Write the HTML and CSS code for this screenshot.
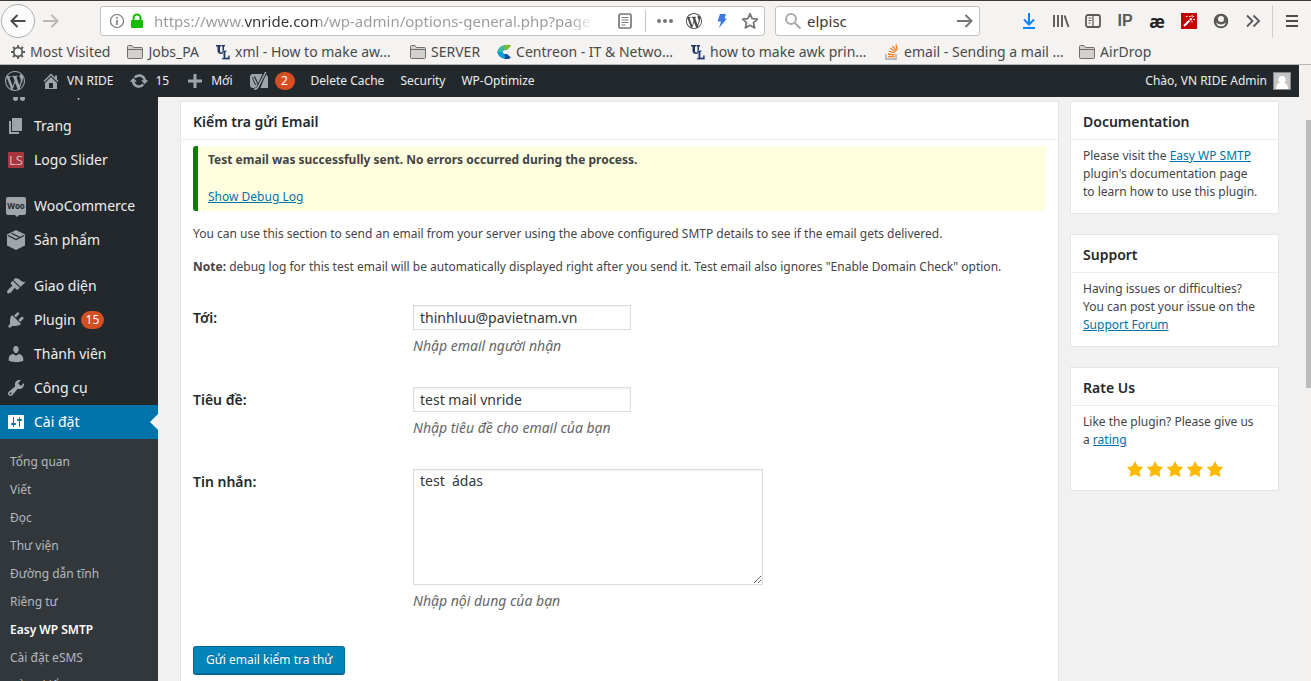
FILE: index.html
```html
<!DOCTYPE html>
<html lang="vi">
<head>
<meta charset="utf-8">
<title>Easy WP SMTP</title>
<link rel="stylesheet" href="styles.css">
</head>
<body>
<svg width="0" height="0" class="defs" aria-hidden="true">
  <symbol id="wp" viewBox="0 0 20 20"><path d="M20 10c0-5.510-4.490-10-10-10C4.480 0 0 4.490 0 10c0 5.520 4.480 10 10 10 5.510 0 10-4.480 10-10zM7.780 15.370L4.370 6.220c.550-.020 1.170-.080 1.170-.080.500-.060.440-1.130-.060-1.110 0 0-1.450.110-2.370.110-.180 0-.370 0-.580-.010C4.120 2.690 6.870 1.110 10 1.110c2.330 0 4.450.870 6.050 2.340-.680-.110-1.650.390-1.650 1.580 0 .740.450 1.360.900 2.100.350.610.550 1.360.550 2.460 0 1.490-1.400 5-1.400 5l-3.030-8.370c.540-.020.820-.170.820-.170.500-.050.440-1.250-.060-1.220 0 0-1.440.120-2.380.120-.870 0-2.330-.120-2.330-.120-.500-.030-.560 1.200-.060 1.220l.920.080 1.260 3.410zM17.410 10c.240-.640.740-1.870.430-4.250.700 1.290 1.050 2.710 1.050 4.250 0 3.290-1.730 6.240-4.400 7.780.970-2.590 1.940-5.200 2.920-7.780zM6.100 18.090C3.120 16.650 1.110 13.530 1.110 10c0-1.300.230-2.480.720-3.590C3.250 10.300 4.670 14.200 6.100 18.090zm4.030-6.630l2.580 6.980c-.860.290-1.760.450-2.710.450-.790 0-1.570-.110-2.290-.330.810-2.380 1.620-4.740 2.420-7.100z"/></symbol>
  <symbol id="folder" viewBox="0 0 18 16"><path d="M1.500 13.500v-11q0-1 1-1h3.500l1.500 2h8q1 0 1 1v9q0 1-1 1h-13q-1 0-1-1z" fill="#d3d1cf" stroke="#6f6e6d"/><path d="M2 5.500h14" stroke="#6f6e6d"/></symbol>
  <symbol id="ul" viewBox="0 0 16 16"><path d="M1 1h5v1.500H5V7q0 1.500 1.300 1.500T7.500 7V2.500h-1V1H10v1.500H9V7.500Q8.700 10 6 10T2.500 7.500v-5H1z" fill="#23365f"/><path d="M7 6.500h4.500V8h-1v5.500H13v-2h1.800V15.500H7V14h1.300V8H7z" fill="#23365f" stroke="#b6c8e6" stroke-width=".5"/></symbol>
  <symbol id="star" viewBox="0 0 20 20"><path d="M10 1l3 6 6 .75-4.120 4.620L16 19l-6-3-6 3 1.130-6.630L1 7.750 7 7z"/></symbol>
</svg>

<header class="browser">
  <div class="toolbar">
    <button class="back" aria-label="Back"><svg width="18" height="16" viewBox="0 0 18 16"><path d="M16.500 8H2.500M8.500 2l-6 6 6 6" fill="none" stroke="#4b4a49" stroke-width="2"/></svg></button>
    <button class="forward" aria-label="Forward"><svg width="18" height="16" viewBox="0 0 18 16"><path d="M1 8h14M9.500 2l6 6-6 6" fill="none" stroke="#bab9b7" stroke-width="2"/></svg></button>
    <div class="urlbar">
      <svg width="16" height="16" viewBox="0 0 16 16"><circle cx="8" cy="8" r="6.500" fill="none" stroke="#777" stroke-width="1.200"/><path d="M8 7v5M8 4v1.800" stroke="#777" stroke-width="1.600"/></svg>
      <svg width="14" height="16" viewBox="0 0 14 16"><path d="M3.500 8V5a3.500 3.500 0 0 1 7 0v3" fill="none" stroke="#12bc00" stroke-width="2"/><rect x="1" y="7" width="12" height="8" rx="1" fill="#12bc00"/></svg>
      <input class="url" aria-label="Address" value="https://www.vnride.com/wp-admin/options-general.php?page=swpsmtp_settings">
      <svg width="16" height="16" viewBox="0 0 16 16"><rect x="2" y="1" width="12" height="14" rx="1.500" fill="none" stroke="#777" stroke-width="1.700"/><path d="M4.500 4.500h7M4.500 7h7M4.500 9.500h7M4.500 12h4" stroke="#777" stroke-width="1.100"/></svg>
      <span class="split"></span>
      <svg class="dots" width="16" height="16" viewBox="0 0 16 16" fill="#777"><circle cx="2" cy="8" r="2"/><circle cx="8" cy="8" r="2"/><circle cx="14" cy="8" r="2"/></svg>
      <svg width="16" height="16" fill="#4a4a4a"><use href="#wp"/></svg>
      <svg width="14" height="16" viewBox="0 0 14 16"><path d="M5 1h6L9.500 5.500H12L4 15l2-6.500H2.500z" fill="#3b78e0"/></svg>
      <svg width="18" height="18" viewBox="0 0 18 18"><path d="M9 1.800l2.200 4.800 5.200.6-3.900 3.500 1.100 5.200L9 13.300l-4.600 2.600 1.100-5.200L1.600 7.200l5.200-.6z" fill="none" stroke="#777" stroke-width="1.800" stroke-linejoin="round"/></svg>
    </div>
    <div class="searchbar">
      <svg width="18" height="18" viewBox="0 0 18 18"><circle cx="7" cy="7" r="5" fill="none" stroke="#a9a9a9" stroke-width="2"/><path d="M11 11l5.500 5.500" stroke="#a9a9a9" stroke-width="2"/></svg>
      <input aria-label="Search" value="elpisc">
      <svg width="18" height="16" viewBox="0 0 18 16"><path d="M1 8h14M9.500 2l6 6-6 6" fill="none" stroke="#777" stroke-width="2"/></svg>
    </div>
    <div class="tools">
      <button aria-label="Downloads"><svg width="16" height="18" viewBox="0 0 16 18"><path d="M8 1v11M3 7.500l5 5 5-5M2 16h12" fill="none" stroke="#0a84ff" stroke-width="2"/></svg></button>
      <button aria-label="Library"><svg width="18" height="16" viewBox="0 0 18 16"><path d="M2 2v12M6 2v12M10 2v12M12.500 2.500l4 11.500" fill="none" stroke="#5b5a59" stroke-width="1.900"/></svg></button>
      <button aria-label="Sidebar"><svg width="16" height="16" viewBox="0 0 16 16"><rect x="1" y="2" width="14" height="12" rx="2" fill="none" stroke="#5b5a59" stroke-width="1.800"/><path d="M8 2v12M3.500 5h3M3.500 7.500h3M3.500 10h2" stroke="#5b5a59" stroke-width="1.200"/></svg></button>
      <button aria-label="IP" class="ip">IP</button>
      <button aria-label="ae" class="ae">æ</button>
      <button aria-label="Magic wand"><svg width="16" height="16" viewBox="0 0 16 16"><path d="M0 0h16v16H0z" fill="#c50000"/><path d="M3 13l5.500-5.500" stroke="#fff" stroke-width="2"/><path d="M9 7l1.500-1.500" stroke="#fff" stroke-width="2.200"/><path d="M8 3.500h1.500M11 2v2M13 3l-1.500 1.500M12 6.500h2M11 8v1.500M5 3.500h1.500" stroke="#fff"/></svg></button>
      <button aria-label="Account"><svg width="16" height="16" viewBox="0 0 16 16"><circle cx="8" cy="8" r="7" fill="#5b5a59"/><circle cx="8" cy="6" r="3" fill="#f4f3f2"/><path d="M3 9.500q5 4 10 0l-1.500 3q-3.500 2-7 0z" fill="#f4f3f2"/><circle cx="8" cy="8" r="6.500" fill="none" stroke="#5b5a59" stroke-width="1.500"/></svg></button>
      <button aria-label="More tools"><svg width="16" height="16" viewBox="0 0 16 16"><path d="M2 2.500L7.500 8 2 13.500M8.500 2.500L14 8l-5.500 5.500" fill="none" stroke="#5b5a59" stroke-width="1.800"/></svg></button>
    </div>
    <button class="burger" aria-label="Menu"><svg width="14" height="14" viewBox="0 0 14 14"><path d="M1 2h12M1 7h12M1 12h12" stroke="#4b4a49" stroke-width="2"/></svg></button>
  </div>
  <nav class="bookmarks">
    <a href="#"><svg width="16" height="16" viewBox="0 0 16 16"><circle cx="8" cy="8" r="4.300" fill="none" stroke="#5b5a59" stroke-width="1.800"/><path d="M8 1v3M8 12v3M1 8h3M12 8h3M3 3l2 2M11 11l2 2M13 3l-2 2M5 11l-2 2" stroke="#5b5a59" stroke-width="1.800"/></svg><span>Most Visited</span></a>
    <a href="#"><svg width="18" height="16"><use href="#folder"/></svg><span>Jobs_PA</span></a>
    <a href="#" class="long"><svg width="16" height="16"><use href="#ul"/></svg><span>xml - How to make aw…</span></a>
    <a href="#"><svg width="18" height="16"><use href="#folder"/></svg><span>SERVER</span></a>
    <a href="#" class="long"><svg width="16" height="16" viewBox="0 0 16 16"><path d="M15 1.500L10.500 6Q8 5.500 6.500 8H1Q3 1.500 9 1z" fill="#35b9a0"/><path d="M9 1q3-.8 6 .5L11.500 5.800 8 5z" fill="#7db928"/><path d="M1 8h5.500Q8 10.800 11 10L9 15Q3 14 1 8z" fill="#009fdf"/><path d="M11 10l4 3.500q-2.500 2-6 1.500L8.500 10z" fill="#174a8c"/></svg><span>Centreon - IT &amp; Netwo…</span></a>
    <a href="#" class="long"><svg width="16" height="16"><use href="#ul"/></svg><span>how to make awk prin…</span></a>
    <a href="#" class="long"><svg width="16" height="16" viewBox="0 0 16 16"><path d="M2 10v5h10v-5" fill="none" stroke="#a9a9a9" stroke-width="1.400"/><path d="M4 12.500h6.500M4 10l6.500.8M4.500 7l6.200 2M6 4l5.500 3.800M8.500 2l4 4.800M12 .5l1.300 5.500" stroke="#f48024" stroke-width="1.300"/></svg><span>email - Sending a mail …</span></a>
    <a href="#"><svg width="18" height="16"><use href="#folder"/></svg><span>AirDrop</span></a>
  </nav>
</header>

<div class="viewport">
  <div class="page">
    <nav class="adminbar">
      <a href="#" aria-label="WordPress"><svg class="icon"><use href="#wp"/></svg></a>
      <a href="#"><svg class="icon" viewBox="0 0 20 20"><path d="M16 8.500l1.530 1.530-1.060 1.060L10 4.600l-6.470 6.490-1.060-1.060L10 2.500l4 4v-2h2v4zm-6-2.460l6 5.990V18H4v-5.970zM12 17v-5H8v5h4z"/></svg>VN RIDE</a>
      <a href="#"><svg class="icon" viewBox="0 0 20 20"><path d="M10.200 3.280c3.530 0 6.430 2.610 6.920 6h2.080l-3.500 4-3.500-4h2.320c-.45-1.970-2.210-3.450-4.320-3.450-1.450 0-2.730.71-3.540 1.780L4.950 5.660C6.230 4.200 8.110 3.280 10.200 3.280zm-.4 13.440c-3.520 0-6.430-2.610-6.920-6H.8l3.500-4c1.170 1.330 2.330 2.670 3.500 4H5.480c.45 1.970 2.210 3.450 4.320 3.450 1.450 0 2.730-.71 3.540-1.780l1.710 1.950c-1.280 1.460-3.150 2.380-5.250 2.380z"/></svg>15</a>
      <a href="#"><svg class="icon" viewBox="0 0 20 20"><path d="M17 8.500v3h-5.500V17h-3v-5.500H3v-3h5.500V3h3v5.500z"/></svg>Mới</a>
      <a href="#" aria-label="Yoast SEO"><svg class="icon" viewBox="0 0 20 20"><path d="M4 3h9.500L8.500 17H4q-3 0-3-3V6q0-3 3-3zM16.500 3.500Q19 4 19 7v10h-7.500z"/><path d="M4.500 6l3.300 7.500M16.500 1L9.500 15.500Q8.500 18.500 5 18.500" fill="none" stroke="#23282d" stroke-width="3.400"/><path d="M4.500 6.500l3.300 7M16.800 1L9.500 15Q8.500 18 5 18.300" fill="none" stroke="#a0a5aa" stroke-width="1.600"/></svg><span class="count">2</span></a>
      <a href="#">Delete Cache</a>
      <a href="#">Security</a>
      <a href="#">WP-Optimize</a>
      <a href="#" class="account">Chào, VN RIDE Admin<svg width="18" height="18" viewBox="0 0 18 18"><path d="M0 0h18v18H0z" fill="#82878c"/><path d="M1 1h16v16H1z" fill="#c5c5c5"/><path d="M9 4a3.600 3.600 0 0 1 2.300 6.500Q15 12 15 17H3q0-5 3.700-6.500A3.600 3.600 0 0 1 9 4z" fill="#fff"/></svg></a>
    </nav>
    <div class="columns">
      <nav class="sidebar">
        <div class="menu">
          <a href="#"><svg class="icon" viewBox="0 0 20 20"><path d="M13 11V4c0-.55-.45-1-1-1h-1.670L9 1H5L3.670 3H2c-.55 0-1 .45-1 1v7c0 .55.45 1 1 1h10c.55 0 1-.45 1-1zM7 4.500a2.500 2.500 0 1 1 0 5 2.500 2.500 0 0 1 0-5zM14 6h5v10.500a2.500 2.500 0 1 1-2-2.450V9h-3V6zm-4 8.050V13h2v3.500a2.500 2.500 0 1 1-2-2.450z"/></svg>Thư viện</a>
          <a href="#"><svg class="icon" viewBox="0 0 20 20"><path d="M6 15V2h10v13H6zm-1 1h8v2H3V5h2v11z"/></svg>Trang</a>
          <a href="#"><span class="ls">LS</span>Logo Slider</a>
          <a href="#" class="group"><span class="woo">Woo</span>WooCommerce</a>
          <a href="#"><svg class="icon" viewBox="0 0 20 20"><path d="M10 0l9 4.500v11L10 20l-9-4.500v-11z"/><path d="M2 5.500l8 4 8-4M5.500 3.200l8.500 4.300" fill="none" stroke="#23282d" stroke-width="1.200"/></svg>Sản phẩm</a>
          <a href="#" class="group"><svg class="icon" viewBox="0 0 20 20"><path d="M14.480 11.060L7.410 3.990l1.500-1.500c.5-.56 2.300-.47 3.510.32 1.210.8 1.430 1.280 2.910 2.100 1.180.64 2.450 1.260 4.450.85zm-.71.71L6.700 4.700 4.930 6.470c-.39.39-.39 1.020 0 1.410l1.060 1.060c.39.39.39 1.030 0 1.420-.6.600-1.430 1.110-2.210 1.690-.35.260-.7.530-1.010.840C1.430 14.230.4 16.080 1.400 17.070c.99 1 2.840-.03 4.180-1.360.31-.31.58-.66.85-1.020.57-.78 1.080-1.610 1.690-2.210.39-.39 1.020-.39 1.410 0l1.060 1.060c.39.39 1.020.39 1.410 0z"/></svg>Giao diện</a>
          <a href="#"><svg class="icon" viewBox="0 0 20 20"><path d="M13.110 4.360L9.870 7.600 8 5.730l3.240-3.240c.35-.34 1.050-.2 1.560.32.52.51.66 1.210.31 1.550zm-8 1.770l.91-1.120 9.010 9.010-1.190.84c-.71.71-2.630 1.160-3.820 1.160H6.140L4.900 17.260c-.59.59-1.540.59-2.120 0-.59-.58-.59-1.530 0-2.120l1.240-1.240v-3.880c0-1.130.4-3.190 1.090-3.890zm7.260 3.970l3.240-3.240c.34-.35 1.040-.21 1.550.31.52.51.66 1.210.31 1.550l-3.240 3.250z"/></svg>Plugin <span class="count">15</span></a>
          <a href="#"><svg class="icon" viewBox="0 0 20 20"><path d="M10 9.250c-2.270 0-2.730-3.440-2.730-3.440C7 4.020 7.820 2 9.970 2c2.160 0 2.980 2.020 2.710 3.810 0 0-.41 3.440-2.680 3.440zm0 2.570L12.720 10c2.390 0 4.520 2.330 4.520 4.530v2.490s-3.650 1.130-7.240 1.130c-3.650 0-7.240-1.130-7.240-1.130v-2.490c0-2.250 1.940-4.480 4.470-4.480z"/></svg>Thành viên</a>
          <a href="#"><svg class="icon" viewBox="0 0 20 20"><path d="M16.680 9.770c-1.340 1.340-3.300 1.670-4.950.99l-5.410 6.520c-.99.99-2.590.99-3.580 0s-.99-2.590 0-3.570l6.520-5.420c-.68-1.650-.35-3.610.99-4.950 1.280-1.280 3.120-1.620 4.720-1.060l-2.890 2.890 2.820 2.820 2.860-2.870c.53 1.580.18 3.390-1.080 4.650zM3.810 16.210c.4.390 1.040.390 1.430 0 .4-.4.4-1.040 0-1.430-.39-.4-1.030-.4-1.430 0-.39.390-.39 1.030 0 1.430z"/></svg>Công cụ</a>
          <a href="#" class="current"><svg class="icon" viewBox="0 0 20 20"><path d="M18 16V4c0-.55-.45-1-1-1H3c-.55 0-1 .45-1 1v12c0 .55.450 1 1 1h14c.55 0 1-.45 1-1zM8 11h1c.55 0 1 .45 1 1s-.45 1-1 1H8v1.500c0 .28-.22.500-.5.500s-.5-.22-.5-.5V13H6c-.55 0-1-.45-1-1s.45-1 1-1h1V5.500c0-.28.22-.5.500-.5s.5.220.5.500V11zm5-2h-1c-.55 0-1-.45-1-1s.45-1 1-1h1V5.500c0-.28.22-.5.500-.5s.5.220.5.500V7h1c.55 0 1 .45 1 1s-.45 1-1 1h-1v5.500c0 .28-.22.500-.5.500s-.5-.22-.5-.5V9z"/></svg>Cài đặt</a>
        </div>
        <div class="submenu">
          <a href="#">Tổng quan</a>
          <a href="#">Viết</a>
          <a href="#">Đọc</a>
          <a href="#">Thư viện</a>
          <a href="#">Đường dẫn tĩnh</a>
          <a href="#">Riêng tư</a>
          <a href="#" class="active">Easy WP SMTP</a>
          <a href="#">Cài đặt eSMS</a>
          <a href="#">Bảng kiểm</a>
        </div>
      </nav>
      <main class="content">
        <section class="box mailer">
          <h2>Kiểm tra gửi Email</h2>
          <div class="inside">
            <div class="notice"><strong>Test email was successfully sent. No errors occurred during the process.</strong><a href="#">Show Debug Log</a></div>
            <p>You can use this section to send an email from your server using the above configured SMTP details to see if the email gets delivered.</p>
            <p><strong>Note:</strong> debug log for this test email will be automatically displayed right after you send it. Test email also ignores "Enable Domain Check" option.</p>
            <form>
              <div class="row"><label for="to">Tới:</label><div><input id="to" value="thinhluu@pavietnam.vn"><p class="hint">Nhập email người nhận</p></div></div>
              <div class="row"><label for="subject">Tiêu đề:</label><div><input id="subject" value="test mail vnride"><p class="hint">Nhập tiêu đề cho email của bạn</p></div></div>
              <div class="row"><label for="message">Tin nhắn:</label><div><textarea id="message">test  ádas</textarea><p class="hint">Nhập nội dung của bạn</p></div></div>
              <button type="button" class="send">Gửi email kiểm tra thử</button>
            </form>
          </div>
        </section>
        <aside>
          <section class="box"><h2>Documentation</h2><div class="inside">Please visit the <a href="#">Easy WP SMTP</a><br>plugin's documentation page<br>to learn how to use this plugin.</div></section>
          <section class="box"><h2>Support</h2><div class="inside">Having issues or difficulties?<br>You can post your issue on the<br><a href="#">Support Forum</a></div></section>
          <section class="box"><h2>Rate Us</h2><div class="inside">Like the plugin? Please give us<br>a <a href="#">rating</a>
            <div class="stars"><svg><use href="#star"/></svg><svg><use href="#star"/></svg><svg><use href="#star"/></svg><svg><use href="#star"/></svg><svg><use href="#star"/></svg></div></div></section>
        </aside>
      </main>
    </div>
  </div>
  <div class="scrollbar"><div class="thumb"></div></div>
</div>
</body>
</html>
```
FILE: styles.css
```css
* { box-sizing: border-box; }
body {
  margin: 0;
  height: 100vh;
  display: flex;
  flex-direction: column;
  overflow: hidden;
  font: 12px/18px "Noto Sans", "Open Sans", sans-serif;
  color: #444;
  background: #f1f1f1;
}
a { color: #0073aa; }
button, input, textarea { font: inherit; color: inherit; margin: 0; }
svg { flex: none; }
.defs { position: absolute; }

/* Browser chrome */
.browser {
  background: #f4f3f2;
  border-top: 1px solid #3c3b37;
  border-bottom: 1px solid #b8b6b4;
  height: 65px;
  flex: none;
}
.toolbar { display: flex; align-items: center; height: 40px; }
.toolbar button {
  border: 0;
  background: none;
  padding: 0;
  display: flex;
  align-items: center;
  justify-content: center;
}
.toolbar .back {
  width: 34px;
  height: 34px;
  margin-left: 1px;
  border: 1px solid #b0aeac;
  border-radius: 50%;
  background: #fcfcfc;
}
.forward { width: 32px; margin-right: 33px; }
.urlbar, .searchbar {
  display: flex;
  align-items: center;
  height: 30px;
  background: #fff;
  border: 1px solid #c4c0bc;
  border-radius: 3px;
}
.urlbar { flex: 1; padding: 0 5px 0 8px; gap: 5px; }
.urlbar input, .searchbar input {
  border: 0;
  outline: 0;
  padding: 0;
  min-width: 0;
  background: none;
  font-size: 15px;
  color: #3a3a3a;
}
.urlbar .url {
  flex: 1;
  margin: 0 18px 0 5px;
  color: transparent;
  background: linear-gradient(90deg, #999 90px, #333 90px, #333 164px, #999 164px, #999 calc(100% - 24px), transparent);
  -webkit-background-clip: text;
  background-clip: text;
}
.split { width: 1px; height: 22px; background: #c4c4c4; margin: 0 6px 0 7px; }
.urlbar .dots { margin-right: 8px; }
.urlbar svg:last-child { margin-left: 7px; }
.urlbar .dots + svg { margin-right: 8px; }
.searchbar { width: 205px; margin-left: 10px; padding: 0 5px 0 8px; gap: 5px; }
.searchbar input { flex: 1; }
.tools { display: flex; margin-left: 33px; }
.tools button { width: 32px; height: 32px; color: #5b5a59; }
.toolbar .ip { font: bold 16px "Liberation Sans", sans-serif; }
.toolbar .ae { font: bold 17px "Open Sans", sans-serif; color: #222; }
.toolbar .burger { width: 39px; height: 33px; margin-left: 3px; border-left: 1px solid #d0cecc; }

.bookmarks { display: flex; gap: 16px; padding: 0 10px; height: 22px; align-items: center; font-size: 14px; }
.bookmarks a { display: flex; align-items: center; gap: 4px; color: #4a4a4a; text-decoration: none; white-space: nowrap; }
.bookmarks .long { width: 178px; }

/* Page frame */
.viewport { flex: 1; display: flex; min-height: 0; }
.page { flex: 1; display: flex; flex-direction: column; min-width: 0; }
.scrollbar { width: 12px; background: #f2f1f0; padding: 55px 0 0 7px; }
.thumb { height: 268px; background: #bcbcbc; }
.icon { width: 20px; height: 20px; fill: #a0a5aa; }
.count {
  background: #d54e21;
  color: #fff;
  border-radius: 10px;
  min-width: 20px;
  height: 18px;
  line-height: 18px;
  padding: 0 6px;
  font-size: 12px;
  text-align: center;
}

.adminbar {
  height: 32px;
  flex: none;
  background: #23282d;
  display: flex;
  align-items: center;
  gap: 16px;
  padding: 0 8px 0 5px;
}
.adminbar a { display: flex; align-items: center; gap: 6px; color: #eee; text-decoration: none; white-space: nowrap; }
.adminbar .account { margin-left: auto; }

/* Side menu */
.columns { flex: 1; display: flex; min-height: 0; }
.sidebar { width: 158px; flex: none; background: #23282d; overflow: hidden; }
.menu { margin-top: -22px; }
.menu a { display: flex; align-items: center; height: 34px; padding-left: 6px; gap: 8px; color: #eee; font-size: 14px; text-decoration: none; }
.menu .group { margin-top: 12px; }
.menu .count { margin-left: -3px; padding: 0 5px; }
.menu .current { background: #0073aa; color: #fff; position: relative; }
.menu .current .icon { fill: #fff; }
.menu .current::after {
  content: "";
  position: absolute;
  right: 0;
  border: 8px solid transparent;
  border-right-color: #f1f1f1;
}
.ls { width: 16px; height: 16px; margin: 0 2px; background: #a8343c; color: #d8c0c2; font: 13px/16px "Open Sans", sans-serif; text-align: center; }
.woo { position: relative; width: 20px; height: 18px; border-radius: 2px; background: #a0a5aa; color: #23282d; font: bold 8px/17px "Open Sans", sans-serif; text-align: center; }
.woo::after { content: ""; position: absolute; left: 9px; top: 18px; border: 2px solid transparent; border-top-color: #a0a5aa; }
.submenu { background: #32373c; padding-top: 9px; height: 260px; }
.submenu a { display: block; padding-left: 10px; line-height: 28px; color: #b4b9be; text-decoration: none; }
.submenu .active { color: #fff; font-weight: 600; }

/* Content */
.content { flex: 1; display: flex; align-items: flex-start; gap: 11px; padding: 4px 20px 0 22px; min-width: 0; }
.box { background: #fff; border: 1px solid #e5e5e5; }
.box h2 { margin: 0; padding: 2px 12px 0; font-size: 14px; line-height: 35px; font-weight: 600; color: #23282d; border-bottom: 1px solid #eee; }
.mailer { flex: 1; min-height: 600px; }
.mailer .inside { padding: 6px 12px; }
.notice { display: flex; flex-direction: column; align-items: flex-start; gap: 19px; background: #ffffe0; border-left: 5px solid green; border-radius: 3px; padding: 5px 10px; }
.inside p { margin: 14px 0 15px; }
form { padding-top: 14px; }
.row { display: grid; grid-template-columns: 220px 1fr; margin-bottom: 32px; }
.row label { font-size: 14px; font-weight: 600; line-height: 25px; color: #23282d; }
.row input, .row textarea { display: block; border: 1px solid #ddd; box-shadow: inset 0 1px 2px rgba(0, 0, 0, .07); background: #fff; color: #32373c; font-size: 14px; padding: 2px 6px; border-radius: 0; }
.row input { width: 218px; height: 25px; }
.row textarea { width: 350px; height: 116px; resize: both; }
.row .hint { margin: 7px 0 0; font-size: 14px; font-style: italic; color: #666; }
.send { height: 29px; margin-top: 4px; padding: 0 12px; color: #fff; background: #0085ba; border: 1px solid #006799; border-bottom-width: 2px; border-radius: 3px; text-shadow: 0 -1px 1px #006799; }
aside { width: 209px; display: flex; flex-direction: column; gap: 20px; }
aside .inside { padding: 7px 0 12px 12px; white-space: nowrap; }
.stars { display: flex; justify-content: center; padding: 11px 12px 0 0; }
.stars svg { width: 20px; height: 18px; fill: #ffb900; }
```
